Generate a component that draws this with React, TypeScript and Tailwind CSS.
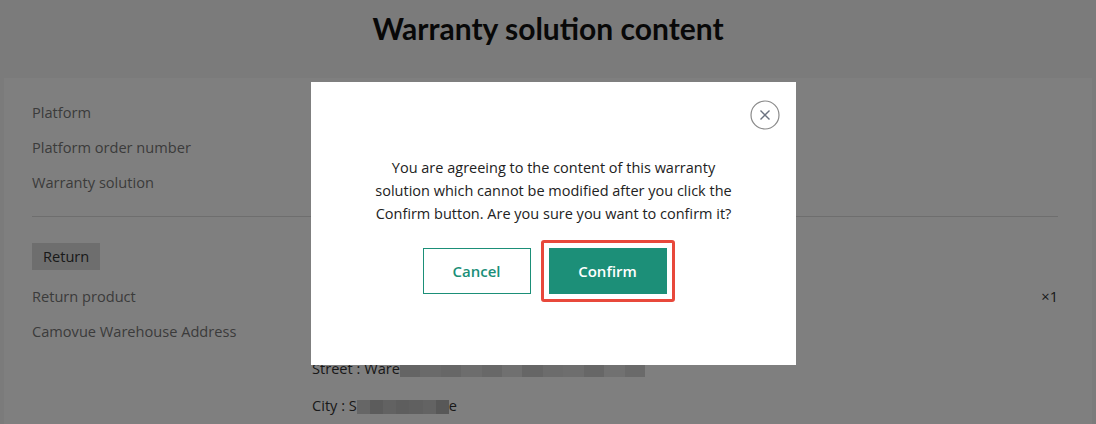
import React from 'react';

const rows = ['Platform', 'Platform order number', 'Warranty solution'];

function Blur({ w, shades }: { w: number; shades: string[] }) {
  // pixelated redaction blocks
  return (
    <span className="inline-flex h-[14px] align-middle" style={{ width: w }}>
      {shades.map((c, i) => (
        <span key={i} className="h-full flex-1" style={{ background: c }} />
      ))}
    </span>
  );
}

export default function App() {
  return (
    <div className="relative h-[424px] w-[1096px] overflow-hidden bg-[#f6f6f6] font-['Open_Sans',sans-serif]">
      <h1 className="pt-[8px] text-center text-[30px] font-bold leading-[40px] text-[#111] font-['Lato',sans-serif]">
        Warranty solution content
      </h1>

      <div className="ml-[4px] mr-[4px] mt-[30px] h-[400px] bg-white pl-[28px] pr-[34px] pt-[23px]">
        <div className="flex flex-col gap-[13px] border-b border-[#ddd] pb-[23px]">
          {rows.map((r) => (
            <div key={r} className="text-[14.6px] leading-[22px] text-[#777]">{r}</div>
          ))}
        </div>

        <div className="mt-[26px] inline-block bg-[#dcdcdc] px-[11px] text-[14.6px] leading-[27px] text-[#333]">Return</div>

        <div className="mt-[15px] flex justify-between text-[14.6px] leading-[22px] text-[#777]">
          <span>Return product</span>
          <span className="text-[#333]">×1</span>
        </div>
        <div className="mt-[13px] text-[14.6px] leading-[22px] text-[#777]">Camovue Warehouse Address</div>

        <div className="ml-[280px] mt-[15px] text-[14.6px] leading-[22px] text-[#333]">
          Street : Ware
          <Blur w={245} shades={['#c8c8c8', '#d4d4d4', '#cfcfcf', '#dadada', '#d0d0d0', '#e0e0e0', '#cccccc', '#d8d8d8', '#dcdcdc', '#cfcfcf', '#e2e2e2', '#d4d4d4']} />
        </div>
        <div className="ml-[280px] mt-[15px] text-[14.6px] leading-[22px] text-[#333]">
          City : S
          <Blur w={92} shades={['#cccccc', '#b8b8b8', '#c4c4c4', '#bcbcbc', '#c0c0c0', '#c6c6c6', '#b0b0b0']} />
          e
        </div>
      </div>

      {/* dim overlay + dialog */}
      <div className="fixed inset-0 flex items-start justify-center bg-black/50 pl-[11px] pt-[82px]">
        <div className="relative h-[283px] w-[485px] bg-white">
          <button className="absolute right-[16px] top-[18px] text-[#888]" aria-label="Close">
            <svg width="30" height="30" viewBox="0 0 30 30" fill="none">
              <circle cx="15" cy="15" r="14" stroke="#8a8a8a" strokeWidth="1.2" />
              <path d="M10.5 10.5 19.5 19.5M19.5 10.5 10.5 19.5" stroke="#6b7280" strokeWidth="1.4" />
            </svg>
          </button>

          <p className="mx-auto mt-[74px] w-[372px] text-center text-[14.5px] leading-[23px] text-[#222]">
            You are agreeing to the content of this warranty solution which cannot be modified after you click the Confirm button. Are you sure you want to confirm it?
          </p>

          <div className="mt-[15px] flex items-center justify-center gap-[10px] pr-[10px]">
            <button className="h-[46px] w-[108px] border border-[#1b8f78] text-[15px] font-semibold text-[#1b8f78]">
              Cancel
            </button>
            <div className="rounded-[3px] border-[3px] border-[#e8483b] p-[5px]">
              <button className="h-[46px] w-[118px] bg-[#1c8f78] text-[15px] font-semibold text-white">
                Confirm
              </button>
            </div>
          </div>
        </div>
      </div>
    </div>
  );
}
